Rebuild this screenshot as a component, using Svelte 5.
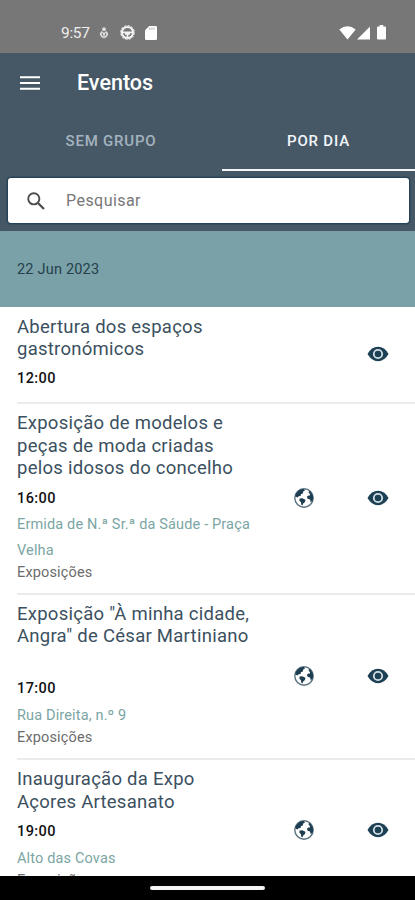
<script>
    let tabs = ["SEM GRUPO", "POR DIA"];
    let active_tab = 1;
    let search = "";

    let events = [
        {title: "Abertura dos espaços\ngastronómicos", time: "12:00"},
        {
            title: "Exposição de modelos e\npeças de moda criadas\npelos idosos do concelho",
            time: "16:00",
            place: "Ermida de N.ª Sr.ª da Sáude - Praça\nVelha",
            category: "Exposições"
        },
        {
            title: "Exposição \"À minha cidade,\nAngra\" de César Martiniano\n\u00a0",
            time: "17:00",
            place: "Rua Direita, n.º 9",
            category: "Exposições"
        },
        {
            title: "Inauguração da Expo\nAçores Artesanato",
            time: "19:00",
            place: "Alto das Covas",
            category: "Exposições"
        }
    ];

    function select_tab(index){
        active_tab = index;
    }
</script>

<div class="screen">
    <div class="status_bar">
        <span class="clock">9:57</span>
        <svg class="mic" width="10" height="14" viewBox="0 0 10 14" fill="none" stroke="#dedede">
            <circle cx="5" cy="3.2" r="1.9" fill="#dedede" stroke="none" />
            <path d="M3.4 5.6 1.6 7.6Q1.8 10.4 5 11.6 8.2 10.4 8.4 7.6L6.6 5.6M3.4 7.2h3.2" stroke-width="1.5" />
            <circle cx="5" cy="9" r="1.1" fill="#dedede" stroke="none" />
        </svg>
        <svg class="wheel" width="15" height="15" viewBox="0 0 15 15" fill="none" stroke="#f2f2f2">
            <circle cx="7.5" cy="7.5" r="5.6" stroke-width="2" />
            <circle cx="7.5" cy="7.5" r="6.9" stroke-width="1" stroke-dasharray="2.2 1.41" />
            <path d="M2 7.4h11M5 9h5M7.5 8v5" stroke-width="1.7" />
        </svg>
        <svg class="card" width="12" height="14" viewBox="0 0 12 14">
            <path d="M4.2 0H10.8Q12 0 12 1.2V12.8Q12 14 10.8 14H1.2Q0 14 0 12.8V4.2Z" fill="#fff" />
            <path d="M4.8 1.6v2M6.9 1.6v2M9 1.6v2" stroke="#aaa" stroke-width="1" />
        </svg>
        <span class="spacer"></span>
        <svg class="wifi" width="17" height="14" viewBox="0 0 17 14">
            <path d="M.3 3.4Q8.5-3.1 16.7 3.4L8.5 13.6Z" fill="#fff" />
        </svg>
        <svg class="signal" width="13" height="14" viewBox="0 0 13 14">
            <path d="M0 13.5 13 .5V13.5Z" fill="#fff" />
        </svg>
        <svg class="battery" width="9" height="15" viewBox="0 0 9 15">
            <path d="M2.7 0H6.3V1.5H8Q9 1.5 9 2.5V13.5Q9 14.5 8 14.5H1Q0 14.5 0 13.5V2.5Q0 1.5 1 1.5H2.7Z" fill="#fff" />
        </svg>
    </div>

    <header>
        <div class="toolbar">
            <svg width="20" height="14" viewBox="0 0 20 14" stroke="#fff" stroke-width="2">
                <path d="M0 1.3H20M0 7H20M0 12.7H20" />
            </svg>
            <h1>Eventos</h1>
        </div>

        <div class="tabs">
            {#each tabs as tab, i}
                <button class="tab" class:active={i === active_tab} on:click={() => select_tab(i)}>{tab}</button>
            {/each}
        </div>

        <div class="search_box">
            <svg width="18" height="18" viewBox="0 0 18 18" fill="none" stroke="#4c4c4c">
                <circle cx="6.8" cy="6.8" r="5.6" stroke-width="1.9" />
                <path d="M11 11 17 17" stroke-width="2.2" />
            </svg>
            <input type="text" placeholder="Pesquisar" bind:value={search}>
        </div>
    </header>

    <div class="date_row">22 Jun 2023</div>

    <div class="event_list">
        {#each events as event}
            <div class="event_row">
                <div class="event_text">
                    <p class="title">{event.title}</p>
                    <p class="time">{event.time}</p>
                    {#if event.place}
                        <p class="place">{event.place}</p>
                        <p class="category">{event.category}</p>
                    {/if}
                </div>
                <div class="icon_cell">
                    {#if event.place}
                        <svg width="20" height="20" viewBox="0 0 20 20">
                            <circle cx="10" cy="10" r="9.2" fill="#fff" stroke="#5b7280" stroke-width="1.4" />
                            <path d="M1.8 6Q4.6 1 9.8 .9L11 2.4 9.2 3.6 8.8 5.4 6.9 6.2 6.6 7.9 4.6 8.2 3.6 9.4 1.2 8.4Z" fill="#1d3d50" />
                            <path d="M5.6 10.6 8.3 10.3 11.4 11.8 11 14 9.2 15.4 8.4 17.6 7.2 16.6 7 14.2 5.4 12.8Z" fill="#1d3d50" />
                            <path d="M15 2.8 16.6 3.8 19 7.8 19 12 16.8 14.2 16 11.6 13.6 10.8 12.9 8.8 14.4 7.4 15.9 7.6 16 6 14.6 4.8Z" fill="#1d3d50" />
                        </svg>
                    {/if}
                </div>
                <div class="icon_cell">
                    <svg width="22" height="16" viewBox="0 0 22 16">
                        <path d="M.5 8Q4.5 .8 11 .8T21.5 8Q17.5 15.2 11 15.2T.5 8Z" fill="#1d4055" />
                        <circle cx="11" cy="8" r="4.2" fill="none" stroke="#d5dfe5" stroke-width="1.8" />
                        <circle cx="11" cy="8" r="2.4" fill="#1d4055" />
                    </svg>
                </div>
            </div>
        {/each}
    </div>

    <div class="nav_bar">
        <div class="handle"></div>
    </div>
</div>

<style>
    :global(body){
        margin: 0;
    }

    .screen{
        display: flex;
        flex-direction: column;
        width: 415px;
        height: 900px;
        overflow: hidden;
        background-color: #fff;
        font-family: Roboto, "Liberation Sans", sans-serif;
    }

    svg{
        display: block;
        flex: none;
    }

    p, h1{
        margin: 0;
    }

    .status_bar{
        display: flex;
        align-items: center;
        flex: none;
        box-sizing: border-box;
        height: 53px;
        padding: 12px 29px 0 61px;
        background-color: #777;
    }

    .clock{
        width: 38px;
        color: #eee;
        font-size: 15.5px;
        letter-spacing: -0.3px;
    }

    .wheel{
        margin-left: 11px;
    }

    .card{
        margin-left: 10px;
    }

    .spacer{
        flex: 1;
    }

    .signal{
        margin-left: 1px;
    }

    .battery{
        margin: 0 0 0 7px;
    }

    header{
        flex: none;
        box-sizing: border-box;
        height: 178px;
        background-color: #465866;
    }

    .toolbar{
        display: flex;
        align-items: center;
        gap: 37px;
        height: 59px;
        padding-left: 20px;
    }

    h1{
        color: #fff;
        font-size: 21.5px;
        font-weight: 500;
    }

    .tabs{
        display: grid;
        grid-template-columns: 222px 193px;
        height: 59px;
    }

    .tab{
        padding: 0;
        border: 0;
        border-bottom: 2px solid transparent;
        background: none;
        color: #a4b3be;
        font-family: inherit;
        font-size: 15px;
        font-weight: 500;
        letter-spacing: 0.8px;
    }

    .active{
        border-color: #f2f6f8;
        color: #f2f6f8;
    }

    .search_box{
        display: flex;
        align-items: center;
        gap: 21px;
        box-sizing: border-box;
        height: 45px;
        margin: 7px 6px 0 8px;
        padding-left: 19px;
        border-radius: 3px;
        background-color: #fff;
        box-shadow: 0 0 2px 1px #1a3b51;
    }

    input{
        width: 250px;
        padding: 0;
        border: 0;
        outline: none;
        color: #333;
        font-family: inherit;
        font-size: 16px;
        letter-spacing: 0.45px;
    }

    input::placeholder{
        color: #777;
    }

    .date_row{
        display: flex;
        align-items: center;
        flex: none;
        height: 76px;
        padding-left: 17px;
        background-color: #7aa1a7;
        color: #24404c;
        font-size: 14.5px;
        letter-spacing: 0.2px;
    }

    .event_list{
        flex: 1;
        min-height: 0;
        overflow: hidden;
        padding-left: 17px;
    }

    .event_row{
        display: grid;
        grid-template-columns: 250px 74px 74px;
        align-items: center;
        border-bottom: 2px solid #ebebeb;
    }

    .event_text{
        padding: 8.5px 0 10.5px;
    }

    .event_text p{
        white-space: pre;
    }

    .title{
        color: #3b5060;
        font-size: 18.5px;
        line-height: 22.4px;
        letter-spacing: 0.26px;
    }

    .event_text .time{
        margin-top: 7px;
        color: #111;
        font-size: 14.5px;
        font-weight: 500;
        line-height: 24px;
        letter-spacing: 0.4px;
    }

    .place{
        padding-top: 1.5px;
        color: #7ba5a4;
        font-size: 14.5px;
        line-height: 25.5px;
        letter-spacing: 0.15px;
    }

    .category{
        color: #6c6c6c;
        font-size: 14.5px;
        line-height: 19px;
        letter-spacing: 0.15px;
    }

    .icon_cell{
        display: flex;
        justify-content: center;
    }

    .nav_bar{
        display: flex;
        justify-content: center;
        align-items: center;
        flex: none;
        height: 24px;
        background-color: #000;
    }

    .handle{
        width: 115px;
        height: 4px;
        border-radius: 2px;
        background-color: #f4f4f4;
    }
</style>
